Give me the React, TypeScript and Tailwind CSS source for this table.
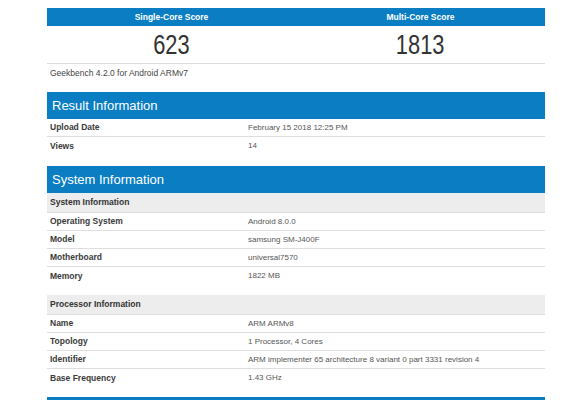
const font = { fontFamily: '"Liberation Sans", Arial, sans-serif' }

interface Row {
  label: string
  value: string
}

const resultRows: Row[] = [
  { label: 'Upload Date', value: 'February 15 2018 12:25 PM' },
  { label: 'Views', value: '14' },
]

const systemRows: Row[] = [
  { label: 'Operating System', value: 'Android 8.0.0' },
  { label: 'Model', value: 'samsung SM-J400F' },
  { label: 'Motherboard', value: 'universal7570' },
  { label: 'Memory', value: '1822 MB' },
]

const processorRows: Row[] = [
  { label: 'Name', value: 'ARM ARMv8' },
  { label: 'Topology', value: '1 Processor, 4 Cores' },
  { label: 'Identifier', value: 'ARM implementer 65 architecture 8 variant 0 part 3331 revision 4' },
  { label: 'Base Frequency', value: '1.43 GHz' },
]

function SectionHeader({ title }: { title: string }) {
  return (
    <div className="h-[27px] bg-[#0b7dc3] flex items-center px-[5px] text-white text-[13px] leading-none">
      {title}
    </div>
  )
}

function SubHeader({ title }: { title: string }) {
  return (
    <div className="h-[20px] bg-[#ededed] border-b border-[#dcdcdc] flex items-center px-[3px] text-[8.5px] font-bold text-[#333]">
      {title}
    </div>
  )
}

function Rows({ rows }: { rows: Row[] }) {
  return (
    <div>
      {rows.map((r, i) => (
        <div
          key={r.label}
          className={`h-[18px] flex items-center ${i < rows.length - 1 ? 'border-b border-[#dedede]' : ''}`}
        >
          <span className="w-[201px] pl-[3px] text-[8.5px] font-bold text-[#3a3a3a]">{r.label}</span>
          <span className="text-[8px] text-[#555]">{r.value}</span>
        </div>
      ))}
    </div>
  )
}

export default function App() {
  return (
    <div className="w-[580px] h-[400px] bg-white overflow-hidden" style={font}>
      <div className="w-[498px] ml-[47px] pt-[8px]">
        <div className="grid grid-cols-2 border-b border-[#dcdcdc]">
          {[
            { title: 'Single-Core Score', score: '623' },
            { title: 'Multi-Core Score', score: '1813' },
          ].map((s) => (
            <div key={s.title}>
              <div className="h-[18px] bg-[#0b7dc3] flex items-center justify-center text-white text-[8.5px] font-bold">
                {s.title}
              </div>
              <div className="h-[37px] flex items-center justify-center">
                <span className="inline-block text-[28px] leading-none text-[#333] scale-x-[0.78]">{s.score}</span>
              </div>
            </div>
          ))}
        </div>
        <div className="h-[18px] flex items-center px-[3px] text-[8.5px] text-[#444]">
          Geekbench 4.2.0 for Android ARMv7
        </div>

        <div className="mt-[10px]">
          <SectionHeader title="Result Information" />
          <Rows rows={resultRows} />
        </div>

        <div className="mt-[11px]">
          <SectionHeader title="System Information" />
          <SubHeader title="System Information" />
          <Rows rows={systemRows} />
          <div className="h-[10px]" />
          <SubHeader title="Processor Information" />
          <Rows rows={processorRows} />
        </div>

        <div className="mt-[10px] h-[28px] bg-[#0b7dc3]" />
      </div>
    </div>
  )
}
